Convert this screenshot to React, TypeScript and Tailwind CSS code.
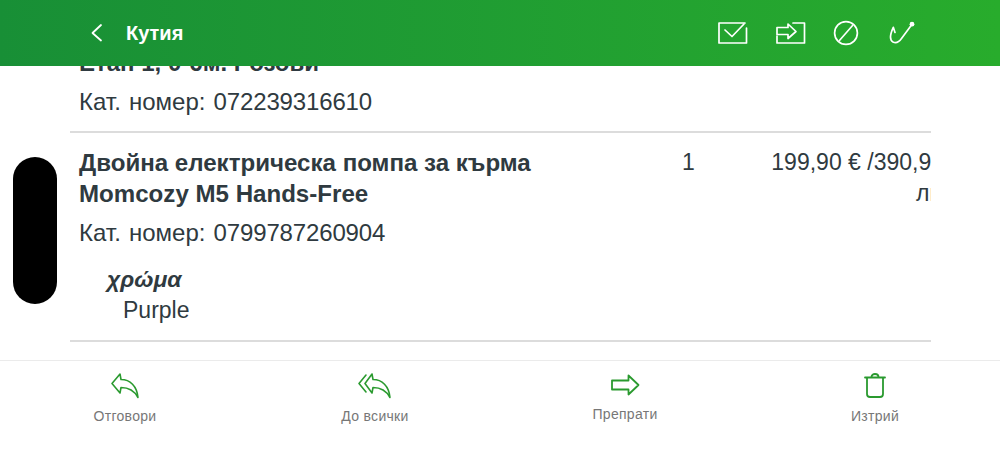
const Divider = () => <div className="h-[2px] bg-[#dcdcdc]" />;

const CatalogNumber = ({ value }: { value: string }) => (
  <p className="mt-2 [word-spacing:1.5px]">
    Кат. номер: <span className="tracking-[-0.15px]">{value}</span>
  </p>
);

const BackIcon = () => (
  <svg width="14" height="20" viewBox="0 0 14 20" fill="none" stroke="white" strokeWidth="1.8" strokeLinecap="round" strokeLinejoin="round">
    <path d="M11 2 L2.5 10 L11 17.5" />
  </svg>
);

const MailIcon = () => (
  <svg width="30" height="22" viewBox="0 0 30 22" fill="none" stroke="white" strokeWidth="1.7" strokeLinejoin="round" strokeLinecap="round">
    <path d="M28.5 6 V21 H1 V1 H27" />
    <path d="M7 8 L14 14.5 L26 2" />
  </svg>
);

const MoveIcon = () => (
  <svg width="30" height="22" viewBox="0 0 30 22" fill="none" stroke="white" strokeWidth="1.7" strokeLinejoin="round" strokeLinecap="round">
    <path d="M17 1 H28.5 V21 H1 V14" />
    <path d="M1 5.5 H12 V2 L20 9.5 L12 16.5 V12.5 H1 Z" />
  </svg>
);

const BanIcon = () => (
  <svg width="26" height="26" viewBox="0 0 26 26" fill="none" stroke="white" strokeWidth="1.7">
    <circle cx="13" cy="13" r="11.4" />
    <path d="M6 21 L20 5" />
  </svg>
);

const HookIcon = () => (
  <svg width="28" height="24" viewBox="0 0 28 24" fill="none" stroke="white" strokeWidth="1.7" strokeLinecap="round" strokeLinejoin="round">
    <circle cx="24" cy="3.2" r="2.4" fill="white" stroke="none" />
    <path d="M23.5 4 L13.5 17.5 C11 21 8 22.5 5 21 C1.5 19 1.5 14.5 5.3 6.3 L7 11.5" />
  </svg>
);

const ReplyIcon = () => (
  <svg width="30" height="26" viewBox="0 0 30 26" fill="none" stroke="#2a9a2f" strokeWidth="1.6" strokeLinejoin="round">
    <path d="M2 10.5 L10 1 L11 6.5 C20 6.5 27 13 28 24.5 C24 17 19 14.5 11 14.5 L10 20 Z" />
  </svg>
);

const ReplyAllIcon = () => (
  <svg width="36" height="26" viewBox="0 0 36 26" fill="none" stroke="#2a9a2f" strokeWidth="1.6" strokeLinejoin="round" strokeLinecap="round">
    <path d="M8 10.5 L15 1 L16 6.5 C25 6.5 32 13 33 24.5 C29 17 24 14.5 16 14.5 L15 20 Z" />
    <path d="M9 2 L2 10.5 L9 19" />
  </svg>
);

const ForwardIcon = () => (
  <svg width="30" height="22" viewBox="0 0 30 22" fill="none" stroke="#2a9a2f" strokeWidth="1.8" strokeLinejoin="round">
    <path d="M2 6.5 H18.5 V1.5 L28.5 11 L18.5 20.5 V15.5 H2 Z" />
  </svg>
);

const TrashIcon = () => (
  <svg width="24" height="26" viewBox="0 0 24 26" fill="none" stroke="#2a9a2f" strokeWidth="1.8" strokeLinejoin="round" strokeLinecap="round">
    <path d="M2 5.5 H22" />
    <path d="M8.5 5 C8.5 1 15.5 1 15.5 5" />
    <path d="M4 6 V22 C4 24 5 25 7 25 H17 C19 25 20 24 20 22 V6" />
  </svg>
);

const actions = [
  { label: "Отговори", icon: <ReplyIcon />, top: "pt-[11px]", gap: "mt-[6px]" },
  { label: "До всички", icon: <ReplyAllIcon />, top: "pt-[11px]", gap: "mt-[6px]" },
  { label: "Препрати", icon: <ForwardIcon />, top: "pt-[10px]", gap: "mt-[5px]" },
  { label: "Изтрий", icon: <TrashIcon />, top: "pt-[10px]", gap: "mt-[7px]" },
];

export default function App() {
  return (
    <div className="relative h-[461px] w-[1000px] flex flex-col overflow-hidden bg-white text-[#2f3a40] font-['Liberation_Sans',Arial,sans-serif]">
      <header className="h-[66px] shrink-0 flex items-center bg-gradient-to-r from-[#188f36] to-[#28ac2c] pl-[90px] pr-[84px] text-white">
        <BackIcon />
        <h1 className="ml-[22px] text-[20px] font-bold">Кутия</h1>
        <div className="ml-auto flex items-center">
          <MailIcon />
          <div className="ml-[28px]"><MoveIcon /></div>
          <div className="ml-[27px]"><BanIcon /></div>
          <div className="ml-[29px]"><HookIcon /></div>
        </div>
      </header>

      <main className="flex-1 min-h-0 overflow-hidden flex flex-col justify-end px-[70px] pb-[18px] text-[24px] leading-[31px]">
        <div className="w-[861px] shrink-0 overflow-hidden">
          <div className="pl-[9px] pb-[14px]">
            <p className="font-bold">Етап 1, 0-6м. Розови</p>
            <CatalogNumber value="072239316610" />
          </div>
          <Divider />
          <div className="flex pl-[9px] pt-[14px] pb-[14px]">
            <div className="w-[594px] shrink-0">
              <p className="font-bold text-[24.1px]">
                Двойна електрическа помпа за кърма
                <br />
                Momcozy M5 Hands-Free
              </p>
              <CatalogNumber value="0799787260904" />
              <p className="mt-4 pl-7 text-[23px] font-bold italic">χρώμα</p>
              <p className="pl-11 text-[23px]">Purple</p>
            </div>
            <div className="w-[60px] shrink-0 pl-[9px] text-[23px]">1</div>
            <div className="w-[220px] shrink-0 pl-[16px] pr-[9px] text-right text-[23px]">
              199,90 € /390,90
              <span className="block -mr-[4px]">лв.</span>
            </div>
          </div>
          <Divider />
        </div>
      </main>

      <footer className="h-[101px] shrink-0 border-t border-[#ebebeb] grid grid-cols-4 text-[14px] text-[#777777]">
        {actions.map((a) => (
          <div key={a.label} className={`flex flex-col items-center ${a.top}`}>
            <div className="h-[28px] flex items-center">{a.icon}</div>
            <span className={`${a.gap} tracking-[0.3px]`}>{a.label}</span>
          </div>
        ))}
      </footer>

      {/* black pill over the left edge */}
      <div className="absolute left-[13px] top-[157px] h-[147px] w-[44px] rounded-full bg-black" />
    </div>
  );
}
